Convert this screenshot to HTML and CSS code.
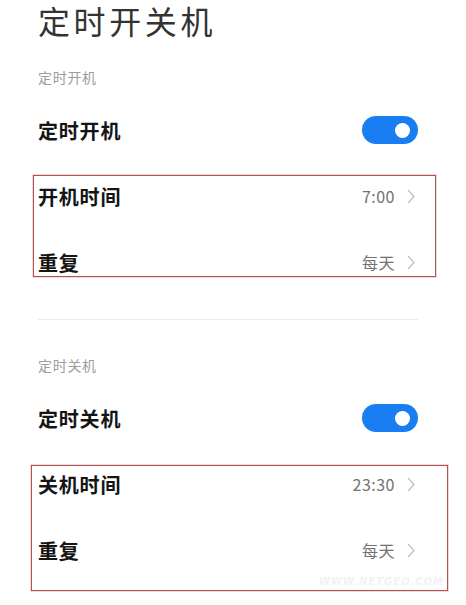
FILE: index.html
```html
<!DOCTYPE html>
<html lang="zh-CN">
<head>
<meta charset="utf-8">
<title>定时开关机</title>
<link rel="stylesheet" href="styles.css">
</head>
<body>
<div class="page">
  <h1 class="title">定时开关机</h1>

  <section class="section">
    <div class="sub">定时开机</div>
    <div class="row">
      <span class="label">定时开机</span>
      <span class="toggle"><span class="knob"></span></span>
    </div>
    <div class="group group-a">
      <div class="row">
        <span class="label">开机时间</span>
        <span class="value">7:00<svg class="chev" viewBox="0 0 8 15" width="8" height="15"><polyline points="1,1 7,7.5 1,14" /></svg></span>
      </div>
      <div class="row">
        <span class="label">重复</span>
        <span class="value">每天<svg class="chev" viewBox="0 0 8 15" width="8" height="15"><polyline points="1,1 7,7.5 1,14" /></svg></span>
      </div>
    </div>
  </section>

  <div class="divider"></div>

  <section class="section">
    <div class="sub">定时关机</div>
    <div class="row">
      <span class="label">定时关机</span>
      <span class="toggle"><span class="knob"></span></span>
    </div>
    <div class="group group-b">
      <div class="row">
        <span class="label">关机时间</span>
        <span class="value">23:30<svg class="chev" viewBox="0 0 8 15" width="8" height="15"><polyline points="1,1 7,7.5 1,14" /></svg></span>
      </div>
      <div class="row">
        <span class="label">重复</span>
        <span class="value">每天<svg class="chev" viewBox="0 0 8 15" width="8" height="15"><polyline points="1,1 7,7.5 1,14" /></svg></span>
      </div>
      <span class="watermark">WWW.NETGEO.COM</span>
    </div>
  </section>
</div>
</body>
</html>
```
FILE: styles.css
```css
html, body {
  margin: 0;
  padding: 0;
  background: #ffffff;
}
body {
  font-family: "Noto Sans CJK SC", "Noto Sans", sans-serif;
  color: #1a1a1a;
}
.page {
  width: 466px;
  box-sizing: border-box;
  padding: 0 48px 22px 38px;
}
.title {
  margin: 0;
  height: 40px;
  line-height: 40px;
  font-size: 32px;
  font-weight: 400;
  letter-spacing: 3.6px;
  color: #333333;
  white-space: nowrap;
}
.sub {
  padding: 27px 0 10px;
  height: 20px;
  line-height: 20px;
  font-size: 14px;
  letter-spacing: 0.7px;
  color: #9d9d9d;
}
.row {
  height: 66px;
  display: flex;
  align-items: center;
  justify-content: space-between;
}
.label {
  font-size: 20px;
  font-weight: 700;
  letter-spacing: 0.8px;
  color: #151515;
}
.value {
  display: flex;
  align-items: center;
  font-size: 16px;
  color: #737373;
  letter-spacing: 0.5px;
}
.chev {
  margin-left: 12px;
  margin-right: 3px;
  fill: none;
  stroke: #bdbdbd;
  stroke-width: 1.2;
}
.toggle {
  width: 56px;
  height: 28px;
  border-radius: 14px;
  background: #1a7ef3;
  display: flex;
  align-items: center;
  justify-content: flex-end;
  padding-right: 8px;
  box-sizing: border-box;
}
.knob {
  width: 15px;
  height: 15px;
  border-radius: 50%;
  background: #ffffff;
}
.divider {
  height: 1px;
  background: #ececec;
  margin: 24px 0 8px;
}
.group {
  position: relative;
}
.group::after {
  content: "";
  position: absolute;
  border: 1px solid #b5524e;
  box-shadow: 0 0 0 0.5px rgba(181, 82, 78, 0.45);
  pointer-events: none;
}
.group-a::after {
  top: 12px;
  bottom: 18px;
  left: -5px;
  right: -18px;
}
.group-b::after {
  top: 14px;
  bottom: -8px;
  left: -7px;
  right: -30px;
}
.watermark {
  position: absolute;
  right: -26px;
  bottom: -4px;
  font-family: "DejaVu Sans", sans-serif;
  font-size: 10px;
  font-weight: 700;
  font-style: italic;
  letter-spacing: 1px;
  color: #f2f2f2;
}
```
